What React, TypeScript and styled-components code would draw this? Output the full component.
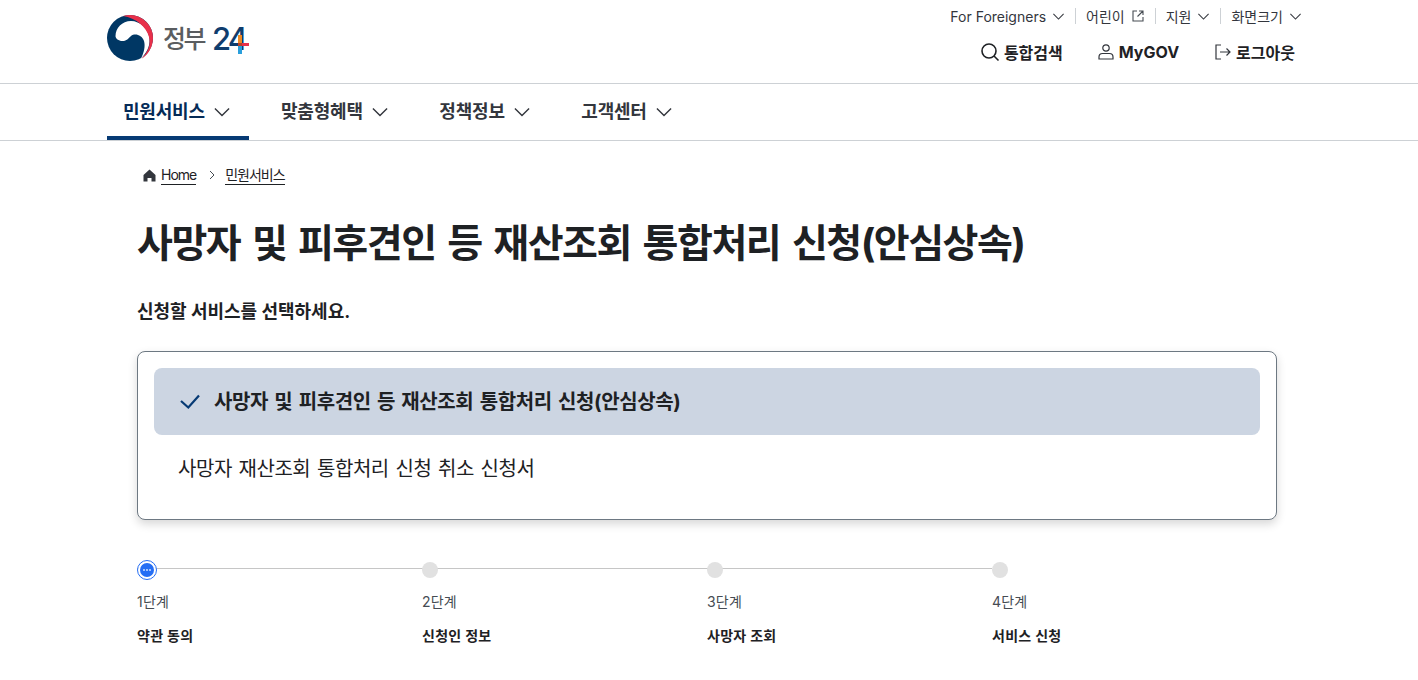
import React from "react";
import styled, { createGlobalStyle } from "styled-components";

const FONT = `Inter, "Noto Sans CJK KR", "Noto Sans", sans-serif`;

const GlobalStyle = createGlobalStyle`
  html, body { margin: 0; padding: 0; background: #fff; }
  body { font-family: ${FONT}; color: #1e2124; }
  * { box-sizing: border-box; }
`;

const Page = styled.div`
  width: 1418px;
  height: 680px;
  overflow: hidden;
`;

const Header = styled.header`
  height: 84px;
  border-bottom: 1px solid #cdd1d5;
`;

const HeaderInner = styled.div`
  width: 1204px;
  margin: 0 auto;
  display: flex;
  justify-content: space-between;
`;

const Logo = styled.a`
  display: flex;
  align-items: center;
  height: 75px;
`;

const LogoWord = styled.span`
  margin: 2px 0 0 10px;
  font-size: 25px;
  line-height: 30px;
  font-weight: 500;
  color: #5a5d60;
  letter-spacing: -2.5px;
  display: flex;
  align-items: center;
`;

const LogoNum = styled.span`
  position: relative;
  color: #0f3d6e;
  font-size: 31px;
  font-weight: 500;
  letter-spacing: -3px;
  margin-left: 8px;
`;

const LogoPlus = styled.svg`
  position: absolute;
  left: 26px;
  top: 11px;
`;

const Utility = styled.div`
  display: flex;
  flex-direction: column;
  align-items: flex-end;
`;

const UtilRow = styled.ul`
  list-style: none;
  margin: 0;
  padding: 0 9px 0 0;
  height: 32px;
  display: flex;
  align-items: center;
`;

const UtilItem = styled.li<{ $first?: boolean }>`
  display: flex;
  align-items: center;
  gap: 6px;
  height: 16px;
  font-size: 14px;
  color: #33363d;
  padding-left: ${(p) => (p.$first ? 0 : "10px")};
  margin-left: ${(p) => (p.$first ? 0 : "10px")};
  border-left: ${(p) => (p.$first ? "none" : "1px solid #cdd1d5")};
`;

const ActionRow = styled.div`
  display: flex;
  align-items: center;
  gap: 34px;
  height: 39px;
  padding-right: 16px;
`;

const Action = styled.a`
  display: flex;
  align-items: center;
  gap: 4px;
  font-size: 16px;
  font-weight: 700;
  color: #1e2124;
  &:last-child {
    margin-left: 1px;
  }
`;

const Nav = styled.nav`
  height: 57px;
  border-bottom: 1px solid #cdd1d5;
`;

const NavInner = styled.ul`
  list-style: none;
  width: 1204px;
  margin: 0 auto;
  padding: 0;
  display: flex;
`;

const NavItem = styled.li<{ $active?: boolean }>`
  height: 56px;
  width: ${(p) => (p.$active ? "142px" : "auto")};
  margin-right: ${(p) => (p.$active ? "16px" : "18.5px")};
  padding: 0 16px;
  display: flex;
  align-items: center;
  gap: 8px;
  font-size: 18px;
  font-weight: 700;
  letter-spacing: -0.2px;
  white-space: nowrap;
  color: ${(p) => (p.$active ? "#052b57" : "#33363d")};
  border-bottom: 4px solid ${(p) => (p.$active ? "#063a74" : "transparent")};
`;

const NavChevron = styled.span`
  display: flex;
  margin-top: 4px;
`;

const Main = styled.main`
  width: 1140px;
  margin: 0 0 0 137px;
`;

const Crumbs = styled.div`
  display: flex;
  align-items: center;
  height: 20px;
  margin: 24px 0 0 5px;
  font-size: 14px;
  letter-spacing: -1px;
`;

const CrumbLink = styled.a`
  color: #1e2124;
  border-bottom: 1px solid #1e2124;
  line-height: 18px;
  margin-left: 4px;
`;

const CrumbSep = styled.svg`
  margin: 0 5px 0 12px;
`;

const Title = styled.h1`
  margin: 30px 0 0;
  font-size: 39px;
  line-height: 56px;
  font-weight: 700;
  letter-spacing: -1.5px;
  word-spacing: 4px;
  color: #1e2124;
`;

const Lead = styled.p`
  margin: 27px 0 0;
  font-size: 18px;
  line-height: 28px;
  font-weight: 700;
`;

const Card = styled.div`
  margin-top: 25px;
  height: 169px;
  padding: 16px;
  background: #fff;
  border: 1px solid #6d7882;
  border-radius: 8px;
  box-shadow: 0 4px 10px rgba(0, 0, 0, 0.16);
`;

const Option = styled.div<{ $selected?: boolean }>`
  height: 67px;
  display: flex;
  align-items: center;
  gap: 12px;
  padding: 0 0 2px 24px;
  border-radius: 8px;
  font-size: 20px;
  letter-spacing: ${(p) => (p.$selected ? "-0.4px" : "-0.45px")};
  word-spacing: ${(p) => (p.$selected ? "2px" : "1.5px")};
  font-weight: ${(p) => (p.$selected ? 700 : 400)};
  background: ${(p) => (p.$selected ? "#ccd5e2" : "transparent")};
  color: #1e2124;
`;

const Steps = styled.ol`
  list-style: none;
  margin: 40px 0 0;
  padding: 0;
  display: grid;
  grid-template-columns: repeat(4, 285px);
`;

const Step = styled.li<{ $last?: boolean }>`
  position: relative;
  &::before {
    content: "";
    display: ${(p) => (p.$last ? "none" : "block")};
    position: absolute;
    left: 0;
    right: 0;
    top: 8px;
    height: 1px;
    background: #c6c6c6;
  }
`;

const Dot = styled.div`
  position: relative;
  width: 16px;
  height: 16px;
  margin-top: 2px;
  border-radius: 50%;
  background: #e1e1e1;
`;

const ActiveDot = styled.div`
  position: relative;
  width: 20px;
  height: 20px;
  border-radius: 50%;
  background: #fff;
  border: 1.5px solid #256ef4;
  display: flex;
  align-items: center;
  justify-content: center;
`;

const ActiveInner = styled.div`
  width: 14px;
  height: 14px;
  border-radius: 50%;
  background: #256ef4;
  display: flex;
  align-items: center;
  justify-content: center;
  gap: 1px;
`;

const Pip = styled.span`
  width: 2px;
  height: 2px;
  border-radius: 50%;
  background: #cfe0ff;
`;

const StepLabel = styled.div<{ $tall?: boolean }>`
  margin-top: ${(p) => (p.$tall ? "12px" : "14px")};
  font-size: 14px;
  line-height: 20px;
  color: #464c53;
  letter-spacing: 0.2px;
`;

const StepName = styled.div`
  margin-top: 14px;
  font-size: 14px;
  line-height: 20px;
  font-weight: 700;
  letter-spacing: 0.3px;
  color: #1e2124;
`;

const Chevron: React.FC<{ size?: number; color?: string }> = ({ size = 14, color = "#33363d" }) => (
  <svg width={size} height={size} viewBox="0 0 14 14" fill="none">
    <path d="M1.5 4.2 7 9.7l5.500-5.500" stroke={color} strokeWidth="1.100" />
  </svg>
);

const Emblem = () => (
  <svg width="46" height="46" viewBox="0 0 46 46">
    <circle cx="23" cy="23" r="23" fill="#003764" />
    <path
      d="M8.500 21C8.500 13 15 6 24 6c9 0 18 8 18.500 18 .4 8-3 14-8.500 19.500 3-6 4.500-12.500 3-17.500-2-6-9-8-13-5-3 2.500-4 5-8.500 5-4 0-7-2.500-7-5Z"
      fill="#fff"
    />
    <path
      d="M16 1.100A23 23 0 0 1 46 23c0 9-5 17-11.500 20.800C41 37 44 30 42 22 39.500 12 29 3 16 1.100Z"
      fill="#e8304a"
    />
  </svg>
);

const App: React.FC = () => {
  return (
    <Page>
      <GlobalStyle />
      <Header>
        <HeaderInner>
          <Logo>
            <Emblem />
            <LogoWord>
              정부
              <LogoNum>
                24
                <LogoPlus width="11" height="19" viewBox="0 0 11 19">
                  <rect x="0" y="0" width="4" height="8" fill="#f08a24" />
                  <rect x="0" y="8" width="4" height="3" fill="#b5402a" />
                  <rect x="0" y="11" width="4" height="8" fill="#2a9fdc" />
                  <rect x="4" y="8" width="7" height="3" fill="#e8304a" />
                </LogoPlus>
              </LogoNum>
            </LogoWord>
          </Logo>
          <Utility>
            <UtilRow>
              <UtilItem $first>
                For Foreigners <Chevron size={13} />
              </UtilItem>
              <UtilItem>
                어린이
                <svg width="14" height="14" viewBox="0 0 14 14" fill="none" stroke="#464c53" strokeWidth="1.100">
                  <path d="M6 2H2v10h10V8M8 2h4v4M12 2 6.500 7.500" />
                </svg>
              </UtilItem>
              <UtilItem>
                지원 <Chevron size={13} />
              </UtilItem>
              <UtilItem>
                화면크기 <Chevron size={13} />
              </UtilItem>
            </UtilRow>
            <ActionRow>
              <Action>
                <svg width="20" height="20" viewBox="0 0 20 20" fill="none" stroke="#1e2124" strokeWidth="1.600">
                  <circle cx="9" cy="9" r="7" />
                  <path d="m14 14 4.500 4.500" />
                </svg>
                통합검색
              </Action>
              <Action>
                <svg width="18" height="18" viewBox="0 0 18 18" fill="none" stroke="#33363d" strokeWidth="1.200">
                  <circle cx="9" cy="5" r="3.200" />
                  <path d="M2 16v-2c0-2 1.500-3.500 3.500-3.500h7c2 0 3.500 1.500 3.500 3.500v2Z" />
                </svg>
                MyGOV
              </Action>
              <Action>
                <svg width="18" height="18" viewBox="0 0 18 18" fill="none" stroke="#33363d" strokeWidth="1.200">
                  <path d="M7 2H2v14h5M6 9h10M12.500 5.500 16 9l-3.500 3.500" />
                </svg>
                로그아웃
              </Action>
            </ActionRow>
          </Utility>
        </HeaderInner>
      </Header>

      <Nav>
        <NavInner>
          <NavItem $active>
            민원서비스
            <NavChevron>
              <Chevron size={18} />
            </NavChevron>
          </NavItem>
          <NavItem>
            맞춤형혜택
            <NavChevron>
              <Chevron size={18} />
            </NavChevron>
          </NavItem>
          <NavItem>
            정책정보
            <NavChevron>
              <Chevron size={18} />
            </NavChevron>
          </NavItem>
          <NavItem>
            고객센터
            <NavChevron>
              <Chevron size={18} />
            </NavChevron>
          </NavItem>
        </NavInner>
      </Nav>

      <Main>
        <Crumbs>
          <svg width="15" height="15" viewBox="0 0 15 15">
            <path d="M7.500 1.500 1.500 7v6.500h4V10h4v3.500h4V7Z" fill="#33363d" />
          </svg>
          <CrumbLink>Home</CrumbLink>
          <CrumbSep width="8" height="10" viewBox="0 0 8 10" fill="none" stroke="#464c53" strokeWidth="1">
            <path d="m2 1 4 4-4 4" />
          </CrumbSep>
          <CrumbLink>민원서비스</CrumbLink>
        </Crumbs>

        <Title>사망자 및 피후견인 등 재산조회 통합처리 신청(안심상속)</Title>
        <Lead>신청할 서비스를 선택하세요.</Lead>

        <Card>
          <Option $selected>
            <svg width="24" height="24" viewBox="0 0 24 24" fill="none" stroke="#063a74" strokeWidth="2.200">
              <path d="M3 12 10.300 18.500 21 6.500" />
            </svg>
            사망자 및 피후견인 등 재산조회 통합처리 신청(안심상속)
          </Option>
          <Option>사망자 재산조회 통합처리 신청 취소 신청서</Option>
        </Card>

        <Steps>
          <Step>
            <ActiveDot>
              <ActiveInner>
                <Pip />
                <Pip />
                <Pip />
              </ActiveInner>
            </ActiveDot>
            <StepLabel $tall>1단계</StepLabel>
            <StepName>약관 동의</StepName>
          </Step>
          <Step>
            <Dot />
            <StepLabel>2단계</StepLabel>
            <StepName>신청인 정보</StepName>
          </Step>
          <Step>
            <Dot />
            <StepLabel>3단계</StepLabel>
            <StepName>사망자 조회</StepName>
          </Step>
          <Step $last>
            <Dot />
            <StepLabel>4단계</StepLabel>
            <StepName>서비스 신청</StepName>
          </Step>
        </Steps>
      </Main>
    </Page>
  );
};

export default App;
